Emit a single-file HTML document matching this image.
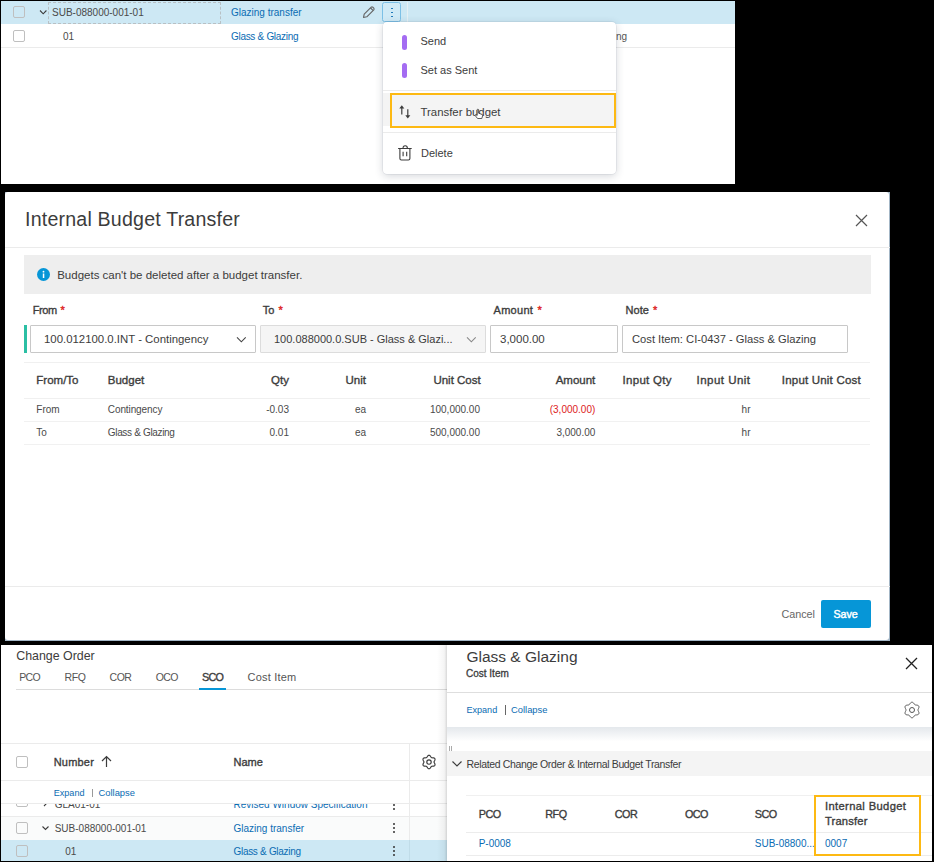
<!DOCTYPE html>
<html><head><meta charset="utf-8"><style>
html,body{margin:0;padding:0;background:#000;width:934px;height:862px;overflow:hidden}
body{position:relative;font-family:"Liberation Sans",sans-serif}
.t{position:absolute;white-space:nowrap;line-height:1}
.r{position:absolute}
</style></head><body>
<div class="r" style="left:1px;top:1px;width:734px;height:183px;background:#fff"></div>
<div class="r" style="left:1px;top:1px;width:734px;height:23px;background:#cde8f4"></div>
<div class="r" style="left:1px;top:47px;width:734px;height:1px;background:#ebebeb"></div>
<div class="r" style="left:13px;top:6px;width:12px;height:12px;border:1px solid #bfbfbf;border-radius:2px;box-sizing:border-box;background:transparent"></div>
<div class="r" style="left:13px;top:30px;width:12px;height:12px;border:1px solid #bfbfbf;border-radius:2px;box-sizing:border-box;background:transparent"></div>
<svg class="r" style="left:39px;top:9px" width="9" height="7" viewBox="0 0 9 7"><path d="M1 1.5 L4.2 4.8 L7.4 1.5" fill="none" stroke="#3c3c3c" stroke-width="1.1"/></svg>
<div class="r" style="left:48px;top:2px;width:173px;height:22px;border:1px dashed #b8c0c4;box-sizing:border-box"></div>
<div class="t" style="top:8.00px;font-size:10px;font-weight:400;color:#4a4a4a;left:52px;">SUB-088000-001-01</div>
<div class="t" style="top:32.00px;font-size:10px;font-weight:400;color:#4a4a4a;left:63px;">01</div>
<div class="t" style="top:8.00px;font-size:10px;font-weight:400;color:#0a6cb3;left:231px;">Glazing transfer</div>
<div class="t" style="top:32.00px;font-size:10px;font-weight:400;color:#0a6cb3;letter-spacing:-0.3px;left:231px;">Glass &amp; Glazing</div>
<svg class="r" style="left:361px;top:5px" width="15" height="15" viewBox="0 0 15 15"><path d="M2.5 12.5 L3.2 9.2 L10.2 2.2 Q11 1.6 11.8 2.2 L12.8 3.2 Q13.4 4 12.8 4.8 L5.8 11.8 Z M9.6 3 L12 5.4" fill="none" stroke="#666" stroke-width="1.15" stroke-linejoin="round"/></svg>
<div class="r" style="left:382px;top:2px;width:19px;height:20px;border:1px solid #7cc0e6;border-radius:2.5px;box-sizing:border-box;background:#d0eaf6"></div>
<div class="r" style="left:391px;top:7.5px;width:1.5px;height:1.5px;background:#0a6cb3;border-radius:1px"></div>
<div class="r" style="left:391px;top:11.5px;width:1.5px;height:1.5px;background:#0a6cb3;border-radius:1px"></div>
<div class="r" style="left:391px;top:15.5px;width:1.5px;height:1.5px;background:#0a6cb3;border-radius:1px"></div>
<div class="r" style="left:407px;top:2px;width:1px;height:20px;background:#e6f0f4"></div>
<div class="t" style="top:32.00px;font-size:10px;font-weight:400;color:#555;left:616px;">ng</div>
<div class="r" style="left:383px;top:22px;width:233px;height:152px;background:#fff;border-radius:4px;box-shadow:0 0 0 0.5px rgba(40,60,90,.12),0 2px 8px rgba(40,50,70,.2)"></div>
<div class="r" style="left:402px;top:35px;width:5px;height:15px;background:#a46cf2;border-radius:2.5px"></div>
<div class="t" style="top:36.00px;font-size:11px;font-weight:400;color:#3c3c3c;left:420.5px;">Send</div>
<div class="r" style="left:402px;top:63px;width:5px;height:15px;background:#a46cf2;border-radius:2.5px"></div>
<div class="t" style="top:65.00px;font-size:11px;font-weight:400;color:#3c3c3c;left:420.5px;">Set as Sent</div>
<div class="r" style="left:383px;top:90px;width:233px;height:1px;background:#ebebeb"></div>
<div class="r" style="left:383px;top:93px;width:233px;height:33px;background:#f4f4f4"></div>
<div class="r" style="left:390px;top:92.5px;width:226px;height:35.0px;border:2px solid #fdb913;box-sizing:border-box"></div>
<svg class="r" style="left:398px;top:104px" width="14" height="16" viewBox="0 0 14 16"><path d="M3.8 10.5 V3" fill="none" stroke="#3c3c3c" stroke-width="1.2"/><path d="M1.3 4.4 L3.8 1.3 L6.3 4.4 Z" fill="#3c3c3c"/><path d="M9.8 5.2 V12" fill="none" stroke="#3c3c3c" stroke-width="1.2"/><path d="M7.3 11.3 L9.8 14.5 L12.3 11.3 Z" fill="#3c3c3c"/></svg>
<div class="t" style="top:107.00px;font-size:11.4px;font-weight:400;color:#3c3c3c;left:420.5px;">Transfer budget</div>
<svg class="r" style="left:474px;top:108px" width="10" height="12" viewBox="0 0 10 12"><path d="M3.2 1.5 Q4 0.8 4.6 1.5 L4.6 5.2 L8 6.4 Q8.8 6.8 8.6 7.8 L7.8 10.5 L3.6 10.5 L1.2 7.6 Q0.8 6.8 1.7 6.6 L3.2 7.4 Z" fill="#fff" stroke="#333" stroke-width="0.8" stroke-linejoin="round"/></svg>
<div class="r" style="left:383px;top:132px;width:233px;height:1px;background:#ebebeb"></div>
<svg class="r" style="left:397px;top:144px" width="16" height="18" viewBox="0 0 16 18"><path d="M1.1 4.5 H14.7 M6 4.5 Q6 1.8 8.2 1.8 Q10.4 1.8 10.4 4.5 M2.9 4.5 V14.5 Q2.9 16 4.4 16 H11.4 Q12.9 16 12.9 14.5 V4.5 M6.1 7.8 V12.3 M9.7 7.8 V12.3" fill="none" stroke="#3c3c3c" stroke-width="1.1"/></svg>
<div class="t" style="top:148.00px;font-size:11px;font-weight:400;color:#3c3c3c;left:421px;">Delete</div>
<div class="r" style="left:5px;top:192px;width:885px;height:449px;background:#a3b6c6"></div>
<div class="r" style="left:5px;top:192px;width:884px;height:448px;background:#fff;border-radius:3px"></div>
<div class="t" style="top:210.00px;font-size:19.6px;font-weight:400;color:#3c3c3c;letter-spacing:0.2px;left:25px;">Internal Budget Transfer</div>
<svg class="r" style="left:855px;top:214px" width="13" height="13" viewBox="0 0 13 13"><path d="M1 1 L12 12 M12 1 L1 12" fill="none" stroke="#555" stroke-width="1.2"/></svg>
<div class="r" style="left:5px;top:247px;width:885px;height:1px;background:#ebebeb"></div>
<div class="r" style="left:24px;top:255px;width:847px;height:39px;background:#eeeeee"></div>
<svg class="r" style="left:37px;top:268px" width="13" height="13" viewBox="0 0 13 13"><circle cx="6.5" cy="6.5" r="6.5" fill="#0696d7"/><rect x="5.8" y="5.5" width="1.5" height="4.5" fill="#fff"/><circle cx="6.5" cy="3.7" r="0.9" fill="#fff"/></svg>
<div class="t" style="top:270.00px;font-size:11.5px;font-weight:400;color:#3c3c3c;left:57.2px;">Budgets can&#39;t be deleted after a budget transfer.</div>
<div class="t" style="top:305.00px;font-size:11px;font-weight:400;color:#3c3c3c;letter-spacing:-0.4px;left:32.7px;-webkit-text-stroke:0.35px #3c3c3c;">From <span style="color:#dd2222;-webkit-text-stroke:0.35px #dd2222;padding-left:1px">*</span></div>
<div class="t" style="top:305.00px;font-size:11px;font-weight:400;color:#3c3c3c;left:262.8px;-webkit-text-stroke:0.35px #3c3c3c;">To <span style="color:#dd2222;-webkit-text-stroke:0.35px #dd2222;padding-left:1px">*</span></div>
<div class="t" style="top:305.00px;font-size:11px;font-weight:400;color:#3c3c3c;letter-spacing:0.3px;left:493.5px;-webkit-text-stroke:0.35px #3c3c3c;">Amount <span style="color:#dd2222;-webkit-text-stroke:0.35px #dd2222;padding-left:1px">*</span></div>
<div class="t" style="top:305.00px;font-size:11px;font-weight:400;color:#3c3c3c;left:625.6px;-webkit-text-stroke:0.35px #3c3c3c;">Note <span style="color:#dd2222;-webkit-text-stroke:0.35px #dd2222;padding-left:1px">*</span></div>
<div class="r" style="left:24px;top:325px;width:3px;height:28px;background:#2bbfa4"></div>
<div class="r" style="left:30px;top:325px;width:226px;height:28px;border:1px solid #c8c8c8;border-radius:1px;box-sizing:border-box;background:#fff"></div>
<div class="t" style="top:334.00px;font-size:11.4px;font-weight:400;color:#3c3c3c;left:44px;">100.012100.0.INT - Contingency</div>
<svg class="r" style="left:235px;top:335px" width="12" height="9" viewBox="0 0 12 9"><path d="M2 2.4 L6.35 6.8 L10.7 2.4" fill="none" stroke="#444" stroke-width="1.1"/></svg>
<div class="r" style="left:260px;top:325px;width:226px;height:28px;border:1px solid #dcdcdc;border-radius:1px;box-sizing:border-box;background:#f5f5f5"></div>
<div class="t" style="top:334.00px;font-size:11px;font-weight:400;color:#3c3c3c;left:274px;">100.088000.0.SUB - Glass &amp; Glazi...</div>
<svg class="r" style="left:464.8px;top:335px" width="12" height="9" viewBox="0 0 12 9"><path d="M2 2.4 L6.35 6.8 L10.7 2.4" fill="none" stroke="#888" stroke-width="1.1"/></svg>
<div class="r" style="left:490px;top:325px;width:128px;height:28px;border:1px solid #c8c8c8;border-radius:1px;box-sizing:border-box;background:#fff"></div>
<div class="t" style="top:334.00px;font-size:11.5px;font-weight:400;color:#3c3c3c;left:500px;">3,000.00</div>
<div class="r" style="left:622px;top:325px;width:226px;height:28px;border:1px solid #c8c8c8;border-radius:1px;box-sizing:border-box;background:#fff"></div>
<div class="t" style="top:334.00px;font-size:11.2px;font-weight:400;color:#3c3c3c;left:632px;">Cost Item: CI-0437 - Glass &amp; Glazing</div>
<div class="r" style="left:24px;top:362px;width:846px;height:1px;background:#f0f0f0"></div>
<div class="t" style="top:375.00px;font-size:11.5px;font-weight:400;color:#3c3c3c;left:36.3px;-webkit-text-stroke:0.35px #3c3c3c;">From/To</div>
<div class="t" style="top:375.00px;font-size:11.5px;font-weight:400;color:#3c3c3c;left:107.8px;-webkit-text-stroke:0.35px #3c3c3c;">Budget</div>
<div class="t" style="top:375.00px;font-size:11.5px;font-weight:400;color:#3c3c3c;right:645px;-webkit-text-stroke:0.35px #3c3c3c;">Qty</div>
<div class="t" style="top:375.00px;font-size:11.5px;font-weight:400;color:#3c3c3c;right:568px;-webkit-text-stroke:0.35px #3c3c3c;">Unit</div>
<div class="t" style="top:375.00px;font-size:11.5px;font-weight:400;color:#3c3c3c;right:453.3px;-webkit-text-stroke:0.35px #3c3c3c;">Unit Cost</div>
<div class="t" style="top:375.00px;font-size:11.5px;font-weight:400;color:#3c3c3c;right:338.70000000000005px;-webkit-text-stroke:0.35px #3c3c3c;">Amount</div>
<div class="t" style="top:375.00px;font-size:11.5px;font-weight:400;color:#3c3c3c;letter-spacing:0.3px;left:622.5px;-webkit-text-stroke:0.35px #3c3c3c;">Input Qty</div>
<div class="t" style="top:375.00px;font-size:11.5px;font-weight:400;color:#3c3c3c;letter-spacing:0.48px;left:696.5px;-webkit-text-stroke:0.35px #3c3c3c;">Input Unit</div>
<div class="t" style="top:375.00px;font-size:11.5px;font-weight:400;color:#3c3c3c;letter-spacing:0.2px;left:781.8px;-webkit-text-stroke:0.35px #3c3c3c;">Input Unit Cost</div>
<div class="r" style="left:24px;top:398px;width:846px;height:1px;background:#f0f0f0"></div>
<div class="t" style="top:405.00px;font-size:10px;font-weight:400;color:#4a4a4a;left:36.3px;">From</div>
<div class="t" style="top:405.00px;font-size:10px;font-weight:400;color:#4a4a4a;letter-spacing:-0.1px;left:107.8px;">Contingency</div>
<div class="t" style="top:405.00px;font-size:10px;font-weight:400;color:#4a4a4a;right:645px;">-0.03</div>
<div class="t" style="top:405.00px;font-size:10px;font-weight:400;color:#4a4a4a;right:568px;">ea</div>
<div class="t" style="top:405.00px;font-size:10px;font-weight:400;color:#4a4a4a;right:454px;">100,000.00</div>
<div class="t" style="top:405.00px;font-size:10px;font-weight:400;color:#dd2222;right:338.70000000000005px;">(3,000.00)</div>
<div class="t" style="top:405.00px;font-size:10px;font-weight:400;color:#4a4a4a;right:183.5px;">hr</div>
<div class="r" style="left:24px;top:421px;width:846px;height:1px;background:#f1f1f1"></div>
<div class="t" style="top:428.00px;font-size:10px;font-weight:400;color:#4a4a4a;left:36.3px;">To</div>
<div class="t" style="top:428.00px;font-size:10px;font-weight:400;color:#4a4a4a;letter-spacing:-0.33px;left:107.8px;">Glass &amp; Glazing</div>
<div class="t" style="top:428.00px;font-size:10px;font-weight:400;color:#4a4a4a;right:645px;">0.01</div>
<div class="t" style="top:428.00px;font-size:10px;font-weight:400;color:#4a4a4a;right:568px;">ea</div>
<div class="t" style="top:428.00px;font-size:10px;font-weight:400;color:#4a4a4a;right:454px;">500,000.00</div>
<div class="t" style="top:428.00px;font-size:10px;font-weight:400;color:#4a4a4a;right:338.70000000000005px;">3,000.00</div>
<div class="t" style="top:428.00px;font-size:10px;font-weight:400;color:#4a4a4a;right:183.5px;">hr</div>
<div class="r" style="left:24px;top:444px;width:846px;height:1px;background:#f1f1f1"></div>
<div class="r" style="left:5px;top:586px;width:885px;height:1px;background:#ebebeb"></div>
<div class="t" style="top:609.00px;font-size:10.8px;font-weight:400;color:#666;right:119px;">Cancel</div>
<div class="r" style="left:821px;top:600px;width:50px;height:28px;background:#0696d7;border-radius:2px"></div>
<div class="t" style="top:609.00px;font-size:10.7px;font-weight:400;color:#fff;left:833.4px;-webkit-text-stroke:0.45px #fff;">Save</div>
<div class="r" style="left:1px;top:645px;width:931px;height:216px;background:#fff"></div>
<div class="t" style="top:650.00px;font-size:12.4px;font-weight:400;color:#3c3c3c;left:16.2px;">Change Order</div>
<div class="t" style="top:672.00px;font-size:10.5px;font-weight:400;color:#555;letter-spacing:-0.6px;left:19.2px;">PCO</div>
<div class="t" style="top:672.00px;font-size:10.5px;font-weight:400;color:#555;letter-spacing:-0.4px;left:64.5px;">RFQ</div>
<div class="t" style="top:672.00px;font-size:10.5px;font-weight:400;color:#555;letter-spacing:-0.5px;left:109.6px;">COR</div>
<div class="t" style="top:672.00px;font-size:10.5px;font-weight:400;color:#555;letter-spacing:-0.6px;left:155.7px;">OCO</div>
<div class="t" style="top:672.00px;font-size:10.8px;font-weight:400;color:#3c3c3c;letter-spacing:-0.75px;left:202px;-webkit-text-stroke:0.35px #3c3c3c;">SCO</div>
<div class="t" style="top:672.00px;font-size:11px;font-weight:400;color:#555;letter-spacing:0.2px;left:247.6px;">Cost Item</div>
<div class="r" style="left:16px;top:689px;width:431px;height:1px;background:#dcdcdc"></div>
<div class="r" style="left:199px;top:688px;width:27px;height:2px;background:#0696d7"></div>
<div class="r" style="left:1px;top:743px;width:446px;height:1px;background:#ebebeb"></div>
<div class="r" style="left:16px;top:756px;width:12px;height:12px;border:1px solid #bfbfbf;border-radius:2px;box-sizing:border-box;background:transparent"></div>
<div class="t" style="top:757.00px;font-size:11px;font-weight:400;color:#3c3c3c;letter-spacing:0.2px;left:53.7px;-webkit-text-stroke:0.35px #3c3c3c;">Number</div>
<svg class="r" style="left:100px;top:755px" width="13" height="13" viewBox="0 0 13 13"><path d="M6.5 12 V1.5 M2 6 L6.5 1.5 L11 6" fill="none" stroke="#3c3c3c" stroke-width="1.2"/></svg>
<div class="t" style="top:757.00px;font-size:11px;font-weight:400;color:#3c3c3c;left:233.5px;-webkit-text-stroke:0.35px #3c3c3c;">Name</div>
<div class="r" style="left:409px;top:743px;width:1px;height:118px;background:#ebebeb"></div>
<svg class="r" style="left:418.7px;top:752px" width="20" height="20" viewBox="0 0 20 20"><polygon points="15.05,10.00 15.10,10.33 15.25,10.69 15.47,11.09 15.70,11.53 15.89,12.00 16.01,12.49 16.00,12.96 15.85,13.38 15.56,13.71 15.16,13.96 14.68,14.10 14.17,14.17 13.68,14.19 13.23,14.20 12.84,14.25 12.53,14.37 12.26,14.59 12.03,14.90 11.79,15.28 11.53,15.70 11.21,16.11 10.85,16.45 10.44,16.67 10.00,16.75 9.56,16.67 9.15,16.45 8.79,16.11 8.47,15.70 8.21,15.28 7.97,14.90 7.74,14.59 7.48,14.37 7.16,14.25 6.77,14.20 6.32,14.19 5.83,14.17 5.32,14.10 4.84,13.96 4.44,13.71 4.15,13.38 4.00,12.96 3.99,12.49 4.11,12.00 4.30,11.53 4.53,11.09 4.75,10.69 4.90,10.33 4.95,10.00 4.90,9.67 4.75,9.31 4.53,8.91 4.30,8.47 4.11,8.00 3.99,7.51 4.00,7.04 4.15,6.63 4.44,6.29 4.84,6.04 5.32,5.90 5.83,5.83 6.32,5.81 6.77,5.80 7.16,5.75 7.47,5.63 7.74,5.41 7.97,5.10 8.21,4.72 8.47,4.30 8.79,3.89 9.15,3.55 9.56,3.33 10.00,3.25 10.44,3.33 10.85,3.55 11.21,3.89 11.53,4.30 11.79,4.72 12.03,5.10 12.26,5.41 12.53,5.63 12.84,5.75 13.23,5.80 13.68,5.81 14.17,5.83 14.68,5.90 15.16,6.04 15.56,6.29 15.85,6.62 16.00,7.04 16.01,7.51 15.89,8.00 15.70,8.47 15.47,8.91 15.25,9.31 15.10,9.67" fill="none" stroke="#3c3c3c" stroke-width="1.15" stroke-linejoin="round"/><circle cx="10" cy="10" r="2.2" fill="none" stroke="#3c3c3c" stroke-width="1.15"/></svg>
<div class="r" style="left:1px;top:780px;width:446px;height:1px;background:#ebebeb"></div>
<div class="t" style="top:789.00px;font-size:9.1px;font-weight:400;color:#0a6cb3;left:53.7px;">Expand</div>
<div class="r" style="left:92px;top:788.5px;width:1px;height:8.0px;background:#9a9a9a"></div>
<div class="t" style="top:788.00px;font-size:9.4px;font-weight:400;color:#0a6cb3;left:98.5px;">Collapse</div>
<div class="r" style="left:1px;top:803px;width:446px;height:1px;background:#ebebeb"></div>
<div class="r" style="left:1px;top:804px;width:446px;height:12px;overflow:hidden">
<div style="position:absolute;left:15px;top:-9px;width:12px;height:12px;border:1px solid #bfbfbf;border-radius:2px;box-sizing:border-box"></div>
<div class="t" style="left:53.7px;top:-4.00px;font-size:10px;color:#4a4a4a">GLA01-01</div>
<div class="t" style="left:232.5px;top:-4.00px;font-size:10px;color:#0a6cb3">Revised Window Specification</div>
<div style="position:absolute;left:392.2px;top:0.3px;width:1.6px;height:1.6px;background:#333;border-radius:1px"></div><div style="position:absolute;left:392.2px;top:4px;width:1.6px;height:1.6px;background:#333;border-radius:1px"></div>
<svg style="position:absolute;left:41px;top:-6px" width="8" height="9"><path d="M2 1 L5.5 4.5 L2 8" fill="none" stroke="#3c3c3c" stroke-width="1.1"/></svg>
</div>
<div class="r" style="left:1px;top:816px;width:446px;height:1px;background:#ebebeb"></div>
<div class="r" style="left:1px;top:817px;width:446px;height:23px;background:#fafbfb"></div>
<div class="r" style="left:409px;top:817px;width:1px;height:23px;background:#ebebeb"></div>
<div class="r" style="left:16px;top:822px;width:12px;height:12px;border:1px solid #bfbfbf;border-radius:2px;box-sizing:border-box;background:transparent"></div>
<svg class="r" style="left:41px;top:825px" width="9" height="7" viewBox="0 0 9 7"><path d="M1.5 1.5 L4.5 4.5 L7.5 1.5" fill="none" stroke="#3c3c3c" stroke-width="1.1"/></svg>
<div class="t" style="top:824.00px;font-size:10px;font-weight:400;color:#4a4a4a;left:54.7px;">SUB-088000-001-01</div>
<div class="t" style="top:824.00px;font-size:10px;font-weight:400;color:#0a6cb3;left:233.5px;">Glazing transfer</div>
<div class="r" style="left:393.2px;top:823.25px;width:1.6000000000000227px;height:1.6000000000000227px;background:#333;border-radius:1px"></div>
<div class="r" style="left:393.2px;top:827.25px;width:1.6000000000000227px;height:1.6000000000000227px;background:#333;border-radius:1px"></div>
<div class="r" style="left:393.2px;top:831.25px;width:1.6000000000000227px;height:1.6000000000000227px;background:#333;border-radius:1px"></div>
<div class="r" style="left:1px;top:840px;width:446px;height:21px;background:#cde8f4"></div>
<div class="r" style="left:409px;top:840px;width:1px;height:21px;background:#c0dce8"></div>
<div class="r" style="left:16px;top:845px;width:12px;height:12px;border:1px solid #bfbfbf;border-radius:2px;box-sizing:border-box;background:transparent"></div>
<div class="t" style="top:847.00px;font-size:10px;font-weight:400;color:#4a4a4a;left:65.3px;">01</div>
<div class="t" style="top:847.00px;font-size:10px;font-weight:400;color:#0a6cb3;letter-spacing:-0.3px;left:233.5px;">Glass &amp; Glazing</div>
<div class="r" style="left:393.2px;top:846.25px;width:1.6000000000000227px;height:1.6000000000000227px;background:#333;border-radius:1px"></div>
<div class="r" style="left:393.2px;top:850.25px;width:1.6000000000000227px;height:1.6000000000000227px;background:#333;border-radius:1px"></div>
<div class="r" style="left:393.2px;top:854.25px;width:1.6000000000000227px;height:1.6000000000000227px;background:#333;border-radius:1px"></div>
<div class="r" style="left:437px;top:645px;width:10px;height:216px;background:linear-gradient(to right, rgba(0,0,0,0), rgba(0,0,0,0.06))"></div>
<div class="r" style="left:447px;top:645px;width:485px;height:216px;background:#fff;box-shadow:-1px 0 2px rgba(0,0,0,0.12)"></div>
<div class="t" style="top:649.00px;font-size:15.5px;font-weight:400;color:#3c3c3c;left:466.4px;">Glass &amp; Glazing</div>
<div class="t" style="top:669.00px;font-size:10px;font-weight:400;color:#3c3c3c;left:466px;-webkit-text-stroke:0.3px #3c3c3c;">Cost Item</div>
<svg class="r" style="left:905px;top:657px" width="13" height="13" viewBox="0 0 13 13"><path d="M1 1 L12 12 M12 1 L1 12" fill="none" stroke="#222" stroke-width="1.3"/></svg>
<div class="r" style="left:447px;top:692px;width:485px;height:1px;background:#dedede"></div>
<div class="t" style="top:706.00px;font-size:9.1px;font-weight:400;color:#0a6cb3;left:466.4px;">Expand</div>
<div class="r" style="left:505px;top:705px;width:1px;height:10px;background:#666"></div>
<div class="t" style="top:705.00px;font-size:9.4px;font-weight:400;color:#0a6cb3;left:511px;">Collapse</div>
<svg class="r" style="left:902px;top:700px" width="20" height="20" viewBox="0 0 20 20"><polygon points="16.00,10.00 16.06,10.40 16.21,10.82 16.43,11.28 16.66,11.79 16.86,12.33 16.96,12.88 16.93,13.42 16.75,13.90 16.43,14.30 15.98,14.59 15.45,14.78 14.88,14.88 14.32,14.93 13.81,14.97 13.37,15.05 13.00,15.20 12.68,15.44 12.40,15.79 12.11,16.21 11.79,16.66 11.41,17.11 10.98,17.47 10.51,17.71 10.00,17.80 9.49,17.71 9.02,17.47 8.59,17.11 8.21,16.66 7.89,16.21 7.60,15.79 7.32,15.44 7.00,15.20 6.63,15.05 6.19,14.97 5.68,14.93 5.12,14.88 4.55,14.78 4.02,14.59 3.57,14.30 3.25,13.90 3.07,13.42 3.04,12.88 3.14,12.33 3.34,11.79 3.57,11.28 3.79,10.82 3.94,10.40 4.00,10.00 3.94,9.60 3.79,9.18 3.57,8.72 3.34,8.21 3.14,7.67 3.04,7.12 3.07,6.58 3.25,6.10 3.57,5.70 4.02,5.41 4.55,5.22 5.12,5.12 5.68,5.07 6.19,5.03 6.63,4.95 7.00,4.80 7.32,4.56 7.60,4.21 7.89,3.79 8.21,3.34 8.59,2.89 9.02,2.53 9.49,2.29 10.00,2.20 10.51,2.29 10.98,2.53 11.41,2.89 11.79,3.34 12.11,3.79 12.40,4.21 12.68,4.56 13.00,4.80 13.37,4.95 13.81,5.03 14.32,5.07 14.88,5.12 15.45,5.22 15.98,5.41 16.43,5.70 16.75,6.10 16.93,6.58 16.96,7.12 16.86,7.67 16.66,8.21 16.43,8.72 16.21,9.18 16.06,9.60" fill="none" stroke="#555" stroke-width="1.0" stroke-linejoin="round"/><circle cx="10" cy="10" r="2.5" fill="none" stroke="#555" stroke-width="1.0"/></svg>
<div class="r" style="left:447px;top:727px;width:485px;height:24px;background:linear-gradient(#e4e8ec, #fff 60%)"></div>
<div class="r" style="left:449px;top:746px;width:1px;height:6px;background:#aaa"></div>
<div class="r" style="left:451px;top:746px;width:1px;height:6px;background:#aaa"></div>
<div class="r" style="left:447px;top:751px;width:485px;height:25px;background:#f4f4f4"></div>
<svg class="r" style="left:451px;top:760px" width="12" height="8" viewBox="0 0 12 8"><path d="M1.5 1.5 L6 6 L10.5 1.5" fill="none" stroke="#3c3c3c" stroke-width="1.2"/></svg>
<div class="t" style="top:759.00px;font-size:10.5px;font-weight:400;color:#3c3c3c;letter-spacing:-0.35px;left:466.5px;">Related Change Order &amp; Internal Budget Transfer</div>
<div class="r" style="left:466px;top:795px;width:466px;height:1px;background:#f0f0f0"></div>
<div class="t" style="top:809.00px;font-size:10.8px;font-weight:400;color:#3c3c3c;letter-spacing:-0.5px;left:478.7px;-webkit-text-stroke:0.35px #3c3c3c;">PCO</div>
<div class="t" style="top:809.00px;font-size:10.8px;font-weight:400;color:#3c3c3c;letter-spacing:-0.5px;left:545.3px;-webkit-text-stroke:0.35px #3c3c3c;">RFQ</div>
<div class="t" style="top:809.00px;font-size:10.8px;font-weight:400;color:#3c3c3c;letter-spacing:-0.5px;left:614.8px;-webkit-text-stroke:0.35px #3c3c3c;">COR</div>
<div class="t" style="top:809.00px;font-size:10.8px;font-weight:400;color:#3c3c3c;letter-spacing:-0.5px;left:684.9px;-webkit-text-stroke:0.35px #3c3c3c;">OCO</div>
<div class="t" style="top:809.00px;font-size:10.8px;font-weight:400;color:#3c3c3c;letter-spacing:-0.5px;left:754.8px;-webkit-text-stroke:0.35px #3c3c3c;">SCO</div>
<div class="t" style="top:801.00px;font-size:11.2px;font-weight:400;color:#3c3c3c;letter-spacing:0.36px;left:825px;-webkit-text-stroke:0.35px #3c3c3c;">Internal Budget</div>
<div class="t" style="top:816.00px;font-size:11.2px;font-weight:400;color:#3c3c3c;letter-spacing:0.16px;left:825px;-webkit-text-stroke:0.35px #3c3c3c;">Transfer</div>
<div class="r" style="left:466px;top:832px;width:466px;height:1px;background:#ececec"></div>
<div class="t" style="top:839.00px;font-size:10px;font-weight:400;color:#0a6cb3;left:478.7px;">P-0008</div>
<div class="t" style="top:839.00px;font-size:10px;font-weight:400;color:#0a6cb3;left:754.8px;">SUB-08800...</div>
<div class="t" style="top:839.00px;font-size:10px;font-weight:400;color:#0a6cb3;left:825px;">0007</div>
<div class="r" style="left:466px;top:855px;width:466px;height:1px;background:#ececec"></div>
<div class="r" style="left:813.5px;top:795px;width:107.5px;height:61px;border:2px solid #fdb913;box-sizing:border-box"></div>
</body></html>
